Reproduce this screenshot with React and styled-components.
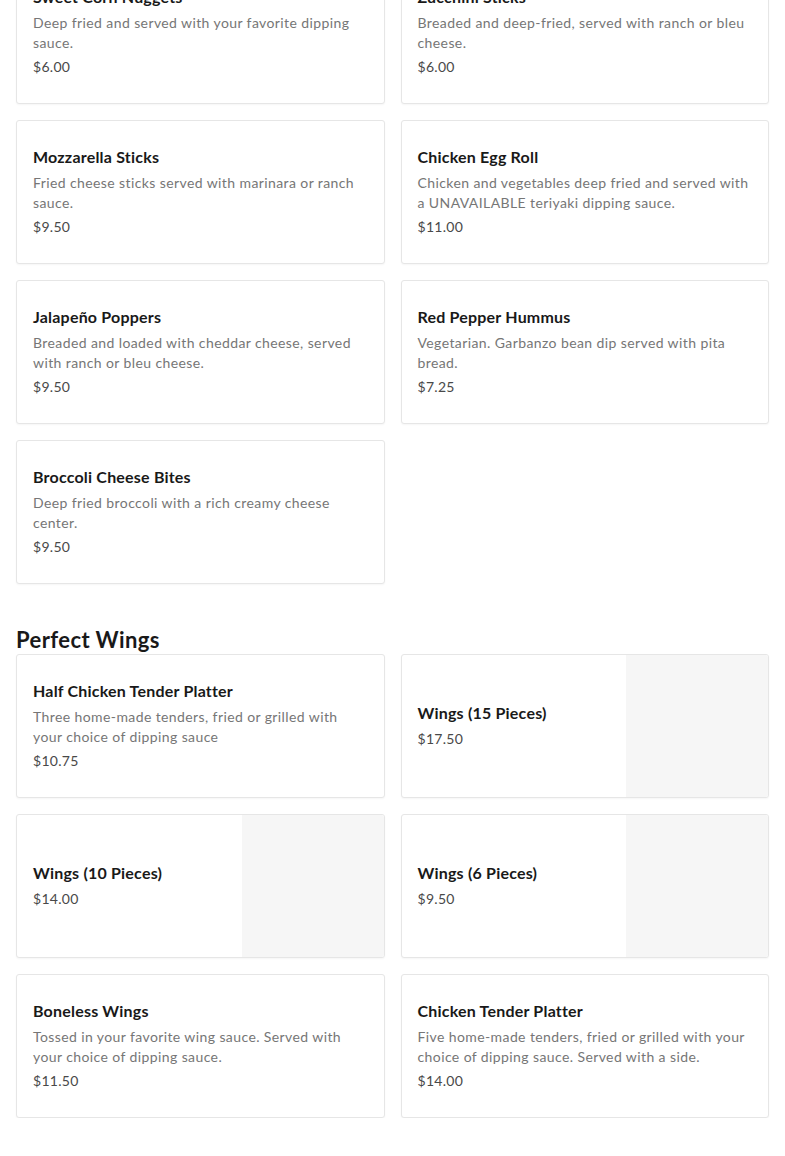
import React from "react";
import styled, { createGlobalStyle } from "styled-components";

const Global = createGlobalStyle`
  html, body { margin: 0; padding: 0; background: #fff; }
  body { font-family: Lato, "Open Sans", sans-serif; color: #191919; }
`;

const Page = styled.main`
  padding: 0 16px;
  margin-top: -40px;
  display: flex;
  flex-direction: column;
`;

const Section = styled.section`
  display: flex;
  flex-direction: column;
  margin-bottom: ${(p) => (p.$last ? "0" : "42px")};
`;

const Heading = styled.h2`
  margin: 0;
  font-size: 22px;
  line-height: 28px;
  font-weight: 700;
  color: #191919;
  letter-spacing: 0.4px;
`;

const Grid = styled.div`
  display: grid;
  grid-template-columns: 1fr 1fr;
  gap: 16px;
`;

const Card = styled.article`
  display: flex;
  height: 144px;
  box-sizing: border-box;
  border: 1px solid #e6e6e6;
  border-radius: 3px;
  background: #fff;
  box-shadow: 0 1px 2px rgba(0, 0, 0, 0.04);
  overflow: hidden;
`;

const Info = styled.div`
  flex: 1;
  min-width: 0;
  display: flex;
  flex-direction: column;
  justify-content: center;
  padding: 0 18px 0 16px;
`;

const Title = styled.h3`
  margin: 0 0 6px;
  font-size: 16px;
  line-height: 20px;
  font-weight: 700;
  color: #191919;
  letter-spacing: 0.2px;
`;

const Desc = styled.p`
  margin: 0 0 4px;
  font-size: 14px;
  line-height: 20px;
  color: #767676;
  letter-spacing: 0.4px;
`;

const Price = styled.span`
  font-size: 14px;
  line-height: 20px;
  color: #494949;
  letter-spacing: 0.3px;
`;

const Photo = styled.div`
  flex: 0 0 142px;
  background: #f6f6f6;
`;

const appetizers = [
  ["Sweet Corn Nuggets", "Deep fried and served with your favorite dipping sauce.", "$6.00"],
  ["Zucchini Sticks", "Breaded and deep-fried, served with ranch or bleu cheese.", "$6.00"],
  ["Mozzarella Sticks", "Fried cheese sticks served with marinara or ranch sauce.", "$9.50"],
  ["Chicken Egg Roll", "Chicken and vegetables deep fried and served with a UNAVAILABLE teriyaki dipping sauce.", "$11.00"],
  ["Jalapeño Poppers", "Breaded and loaded with cheddar cheese, served with ranch or bleu cheese.", "$9.50"],
  ["Red Pepper Hummus", "Vegetarian. Garbanzo bean dip served with pita bread.", "$7.25"],
  ["Broccoli Cheese Bites", "Deep fried broccoli with a rich creamy cheese center.", "$9.50"],
];

const wings = [
  ["Half Chicken Tender Platter", "Three home-made tenders, fried or grilled with your choice of dipping sauce", "$10.75", false],
  ["Wings (15 Pieces)", null, "$17.50", true],
  ["Wings (10 Pieces)", null, "$14.00", true],
  ["Wings (6 Pieces)", null, "$9.50", true],
  ["Boneless Wings", "Tossed in your favorite wing sauce. Served with your choice of dipping sauce.", "$11.50", false],
  ["Chicken Tender Platter", "Five home-made tenders, fried or grilled with your choice of dipping sauce. Served with a side.", "$14.00", false],
];

function Item({ name, desc, price, photo }) {
  return (
    <Card>
      <Info>
        <Title>{name}</Title>
        {desc && <Desc>{desc}</Desc>}
        <Price>{price}</Price>
      </Info>
      {photo && <Photo />}
    </Card>
  );
}

export default function App() {
  return (
    <>
      <Global />
      <Page>
        <Section>
          <Grid>
            {appetizers.map(([n, d, p]) => (
              <Item key={n} name={n} desc={d} price={p} />
            ))}
          </Grid>
        </Section>
        <Section $last>
          <Heading>Perfect Wings</Heading>
          <Grid>
            {wings.map(([n, d, p, ph]) => (
              <Item key={n} name={n} desc={d} price={p} photo={ph} />
            ))}
          </Grid>
        </Section>
      </Page>
    </>
  );
}
